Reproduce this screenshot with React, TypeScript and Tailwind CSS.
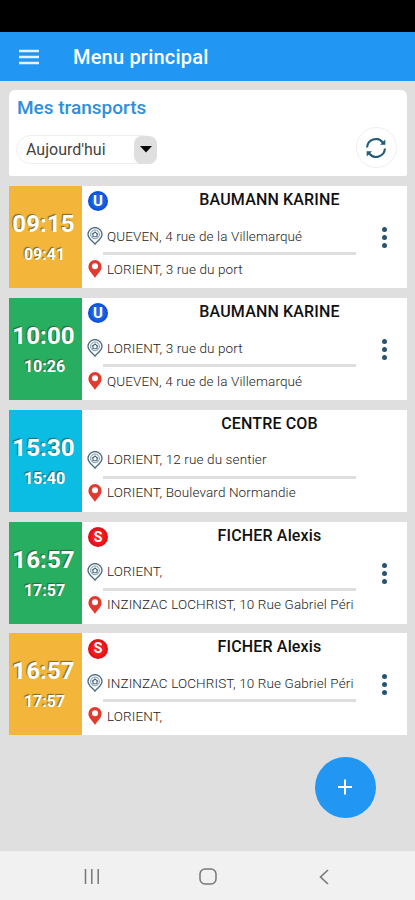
import React from "react";

type Badge = "U" | "S" | null;

interface Transport {
  start: string;
  end: string;
  color: string;
  badge: Badge;
  name: string;
  from: string;
  to: string;
  menu: boolean;
}

const transports: Transport[] = [
  { start: "09:15", end: "09:41", color: "bg-[#f4b63a]", badge: "U", name: "BAUMANN KARINE", from: "QUEVEN, 4 rue de la Villemarqué", to: "LORIENT, 3 rue du port", menu: true },
  { start: "10:00", end: "10:26", color: "bg-[#27ae60]", badge: "U", name: "BAUMANN KARINE", from: "LORIENT, 3 rue du port", to: "QUEVEN, 4 rue de la Villemarqué", menu: true },
  { start: "15:30", end: "15:40", color: "bg-[#0bbde3]", badge: null, name: "CENTRE COB", from: "LORIENT, 12 rue du sentier", to: "LORIENT, Boulevard Normandie", menu: false },
  { start: "16:57", end: "17:57", color: "bg-[#27ae60]", badge: "S", name: "FICHER Alexis", from: "LORIENT,", to: "INZINZAC LOCHRIST, 10 Rue Gabriel Péri", menu: true },
  { start: "16:57", end: "17:57", color: "bg-[#f4b63a]", badge: "S", name: "FICHER Alexis", from: "INZINZAC LOCHRIST, 10 Rue Gabriel Péri", to: "LORIENT,", menu: true },
];

function HomePin() {
  return (
    <svg className="h-[18px] w-4 shrink-0" viewBox="0 0 16 18" fill="none" stroke="#45667f">
      <path d="M8 17.2C5.8 14.2 1 11.6 1 7.6a7 7 0 0 1 14 0c0 4-4.8 6.600-7 9.600Z" strokeWidth="1.300" />
      <circle cx="8" cy="7.400" r="4.400" strokeWidth="0.700" />
      <path d="M5 7.500 8 5l3 2.500M6 7.200v2.500h4V7.200" strokeWidth="1.100" />
    </svg>
  );
}

function RedPin() {
  return (
    <svg className="h-[18px] w-4 shrink-0" viewBox="0 0 16 18">
      <path d="M8 18C6.400 14.600 1.400 11.300 1.400 6.700a6.600 6.600 0 0 1 13.200 0C14.600 11.300 9.600 14.600 8 18Z" fill="#e23b2e" />
      <circle cx="8" cy="6.300" r="3" fill="#fff" />
    </svg>
  );
}

function TransportCard({ item }: { item: Transport }) {
  return (
    <article className="flex h-[102px] bg-white">
      <div className={`flex w-[73px] shrink-0 flex-col items-center pr-1 text-white ${item.color} [text-shadow:-1px_-1px_1px_rgba(50,60,40,0.65)]`}>
        <div className="mt-[23px] text-[24px] leading-[30px] font-bold tracking-[0.1px]">{item.start}</div>
        <div className="mt-[7px] ml-[2px] text-[16px] leading-[18px] font-bold">{item.end}</div>
      </div>
      <div className="flex w-[274px] shrink-0 flex-col pl-[5px]">
        <div className="flex h-[41px] shrink-0">
          <div className="w-[32px] shrink-0 pt-[5.500px] pl-[1px]">
            {item.badge && (
              <div className={`flex size-5 items-center justify-center rounded-full font-bold text-white ${item.badge === "U" ? "bg-[radial-gradient(circle,#1b6bec_35%,#0846d0_75%)] text-[15px]" : "bg-[radial-gradient(circle,#f52020_35%,#d90a12_75%)] text-[14px]"}`}>
                {item.badge}
              </div>
            )}
          </div>
          <h2 className="w-[304px] shrink-0 -ml-[1px] pr-[1px] pt-1 text-center text-[16px] leading-[19px] font-medium tracking-[0.150px] whitespace-nowrap text-[#111]">{item.name}</h2>
        </div>
        <div className="flex h-[18px] items-center gap-[4px] text-[13.500px] tracking-[0.120px] whitespace-nowrap font-light text-[#222]">
          <HomePin />
          <span>{item.from}</span>
        </div>
        <div className="mt-[7px] ml-4 h-[3px] shrink-0 bg-[#dedede]" />
        <div className="mt-[5px] flex h-[18px] items-center gap-[4px] text-[13.500px] tracking-[0.120px] whitespace-nowrap font-light text-[#222]">
          <RedPin />
          <span>{item.to}</span>
        </div>
      </div>
      {item.menu && (
        <button className="ml-[24px] flex w-2 flex-col items-center gap-[3px] pt-[41px]" aria-label="Options">
          <i className="size-[5px] rounded-full bg-[#235570]" />
          <i className="size-[5px] rounded-full bg-[#235570]" />
          <i className="size-[5px] rounded-full bg-[#235570]" />
        </button>
      )}
    </article>
  );
}

export default function App() {
  return (
    <div className="flex h-[900px] w-[415px] flex-col overflow-hidden bg-[#dfdfdf] font-['Roboto','Noto_Sans',sans-serif]">
      <div className="h-8 shrink-0 bg-black" />
      <header className="flex h-[49px] shrink-0 items-center bg-[#2196f3] pl-[19px] text-white">
        <button className="flex w-[20px] items-center" aria-label="Menu">
          <svg width="20" height="16" viewBox="0 0 20 16" stroke="#e3f2fd" strokeWidth="2.400"><path d="M0 2h20M0 8h20M0 14h20" /></svg>
        </button>
        <h1 className="ml-[34px] pt-[1px] text-[20px] font-medium tracking-[0.200px]">Menu principal</h1>
      </header>

      <main className="flex flex-1 flex-col pt-[9px] pr-2 pl-[9px]">
        <section className="h-[86px] shrink-0 rounded-t-[6px] rounded-b-[2px] bg-white pl-2">
          <h2 className="pt-[5px] text-[19px] leading-[26px] font-medium text-[#2d8fdc]">Mes transports</h2>
          <div className="flex justify-between pr-[10px]">
            <div className="mt-[14px] -ml-[1px] flex h-[29px] w-[141px] items-center justify-between rounded-full border border-[#eeeeee] bg-white pl-[9px] text-[16px] text-[#444]">
              <span>Aujourd'hui</span>
              <span className="-mr-px flex h-[28px] w-[23px] items-center justify-center rounded-[8px] bg-[#dfdfdf]">
                <svg width="12" height="7" viewBox="0 0 12 7"><path d="M0 0h12L6 6.500Z" fill="#080808" /></svg>
              </span>
            </div>
            <button className="mt-[6px] flex size-[41px] items-center justify-center rounded-full border-[1.500px] border-[#eeeeee] pr-[1px]" aria-label="Actualiser">
              <svg width="20" height="20" viewBox="0 0 20 20" fill="none" stroke="#235a76" strokeWidth="2.100">
                <path d="M1.100 9.500A8.800 8.800 0 0 1 16.800 4.500M18.900 10.500A8.800 8.800 0 0 1 3.200 15.500" />
                <path d="m19.300 1.500v5.200h-5.200ZM.7 18.500v-5.200h5.200Z" fill="#235a76" stroke="none" />
              </svg>
            </button>
          </div>
        </section>

        <div className="mt-[9.700px] flex flex-col gap-[9.950px]">
          {transports.map((item, index) => <TransportCard key={index} item={item} />)}
        </div>

        <button className="mt-[21.200px] mr-[31px] flex size-[61px] items-center justify-center self-end rounded-full bg-[#2196f3] pr-[1px]" aria-label="Ajouter">
          <svg width="14" height="16" viewBox="0 0 14 16" stroke="#fff" strokeWidth="2"><path d="M7 .5v15M0 8h14" /></svg>
        </button>
      </main>

      <nav className="flex h-[49px] shrink-0 items-center border-t border-[#ebebeb] bg-[#f1f1f1] pt-[1px] text-[#777]">
        <svg className="ml-[84px]" width="16" height="16" viewBox="0 0 16 16" stroke="currentColor" strokeWidth="1.500"><path d="M1.500 0v15M7.800 0v15M14.200 0v15" /></svg>
        <svg className="ml-[99px]" width="18" height="17" viewBox="0 0 18 17" fill="none" stroke="currentColor" strokeWidth="1.500"><rect x="1" y="1" width="16" height="15" rx="5" /></svg>
        <svg className="ml-[102px]" width="10" height="16" viewBox="0 0 10 16" fill="none" stroke="currentColor" strokeWidth="1.600"><path d="M9 1 1.500 8 9 15" /></svg>
      </nav>
    </div>
  );
}
